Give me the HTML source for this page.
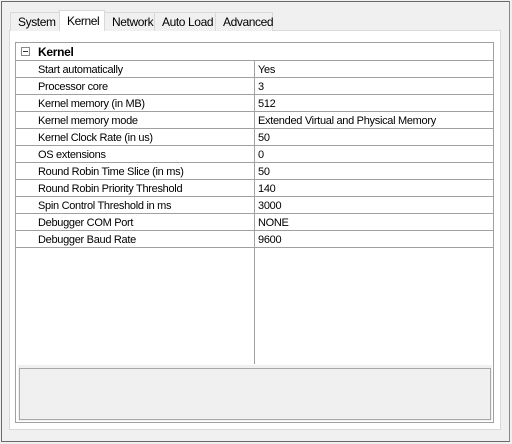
<!DOCTYPE html>
<html><head><style>
*{margin:0;padding:0;box-sizing:border-box}
body{width:512px;height:444px;background:#f0f0f0;position:relative;overflow:hidden;font-family:"Liberation Sans",sans-serif;font-size:11px;letter-spacing:-0.3px;color:#000;white-space:nowrap}
.win{position:absolute;left:1px;top:1px;width:509px;height:441px;border:1px solid #6a6a6a;border-right-color:#8a8a8a;border-bottom-color:#6a6a6a}
.page{position:absolute;left:9px;top:30px;width:492px;height:400px;background:#fff;border:1px solid #d9d9d9}
.tab{position:absolute;top:12px;height:19px;border:1px solid #d9d9d9;border-bottom:none;background:#f0f0f0;padding-left:7px;line-height:19px;font-size:12px;letter-spacing:-0.4px}
.tab.sel{top:10px;height:21px;background:#fff;line-height:20px;z-index:2}
.grid{position:absolute;left:15px;top:42px;width:479px;height:381px;border:1px solid #a0a0a0;background:#fff}
.row{position:absolute;left:0;width:477px;height:18px;border-bottom:1px solid #a0a0a0;line-height:20px}
.row .k{position:absolute;left:22px}
.row .v{position:absolute;left:242px}
.div{position:absolute;left:238px;top:18px;width:1px;height:303px;background:#a0a0a0}
.desc{position:absolute;left:2px;top:322px;width:474px;height:56px;background:#f0f0f0}
.descb{position:absolute;left:3px;top:325px;width:472px;height:52px;border:1px solid #a8a8a8}
</style></head><body>
<div class="win"></div>
<div class="page"></div>
<div class="tab" style="left:10px;width:50px">System</div>
<div class="tab sel" style="left:59px;width:46px">Kernel</div>
<div class="tab" style="left:104px;width:51px">Network</div>
<div class="tab" style="left:154px;width:62px">Auto Load</div>
<div class="tab" style="left:215px;width:58px">Advanced</div>
<div class="grid">
<div class="row" style="top:0"><div style="position:absolute;left:5px;top:4px;width:9px;height:9px;border:1px solid #888"><div style="position:absolute;left:1px;top:3px;width:5px;height:1px;background:#333"></div></div><b style="position:absolute;left:22px;font-size:12px;line-height:18px">Kernel</b></div>
<div class="row" style="top:17px"><span class="k">Start automatically</span><span class="v">Yes</span></div>
<div class="row" style="top:34px"><span class="k">Processor core</span><span class="v">3</span></div>
<div class="row" style="top:51px"><span class="k">Kernel memory (in MB)</span><span class="v">512</span></div>
<div class="row" style="top:68px"><span class="k">Kernel memory mode</span><span class="v">Extended Virtual and Physical Memory</span></div>
<div class="row" style="top:85px"><span class="k">Kernel Clock Rate (in us)</span><span class="v">50</span></div>
<div class="row" style="top:102px"><span class="k">OS extensions</span><span class="v">0</span></div>
<div class="row" style="top:119px"><span class="k">Round Robin Time Slice (in ms)</span><span class="v">50</span></div>
<div class="row" style="top:136px"><span class="k">Round Robin Priority Threshold</span><span class="v">140</span></div>
<div class="row" style="top:153px"><span class="k">Spin Control Threshold in ms</span><span class="v">3000</span></div>
<div class="row" style="top:170px"><span class="k">Debugger COM Port</span><span class="v">NONE</span></div>
<div class="row" style="top:187px"><span class="k">Debugger Baud Rate</span><span class="v">9600</span></div>
<div class="div"></div>
<div class="desc"></div><div class="descb"></div>
</div>
</body></html>
